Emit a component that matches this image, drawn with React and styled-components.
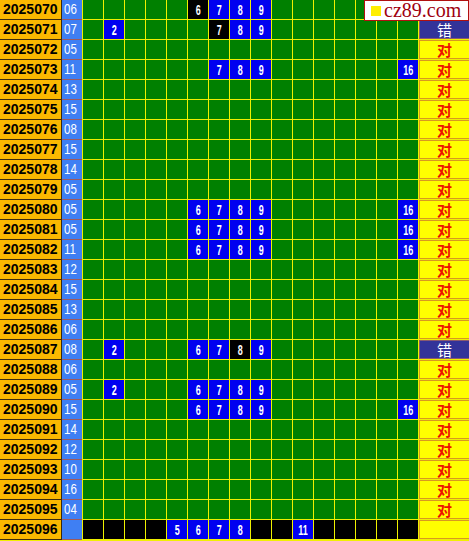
import React from "react";
import styled, { createGlobalStyle } from "styled-components";

const GlobalStyle = createGlobalStyle`
  html, body { margin: 0; padding: 0; background: #ffffff; }
  body { font-family: "Liberation Sans", Arial, sans-serif; }
`;

const rows = [
  { p: "2025070", n: "06", blue: [7, 8, 9], black: [6], s: "" },
  { p: "2025071", n: "07", blue: [2, 8, 9], black: [7], s: "err" },
  { p: "2025072", n: "05", blue: [], black: [], s: "ok" },
  { p: "2025073", n: "11", blue: [7, 8, 9, 16], black: [], s: "ok" },
  { p: "2025074", n: "13", blue: [], black: [], s: "ok" },
  { p: "2025075", n: "15", blue: [], black: [], s: "ok" },
  { p: "2025076", n: "08", blue: [], black: [], s: "ok" },
  { p: "2025077", n: "15", blue: [], black: [], s: "ok" },
  { p: "2025078", n: "14", blue: [], black: [], s: "ok" },
  { p: "2025079", n: "05", blue: [], black: [], s: "ok" },
  { p: "2025080", n: "05", blue: [6, 7, 8, 9, 16], black: [], s: "ok" },
  { p: "2025081", n: "05", blue: [6, 7, 8, 9, 16], black: [], s: "ok" },
  { p: "2025082", n: "11", blue: [6, 7, 8, 9, 16], black: [], s: "ok" },
  { p: "2025083", n: "12", blue: [], black: [], s: "ok" },
  { p: "2025084", n: "15", blue: [], black: [], s: "ok" },
  { p: "2025085", n: "13", blue: [], black: [], s: "ok" },
  { p: "2025086", n: "06", blue: [], black: [], s: "ok" },
  { p: "2025087", n: "08", blue: [2, 6, 7, 9], black: [8], s: "err" },
  { p: "2025088", n: "06", blue: [], black: [], s: "ok" },
  { p: "2025089", n: "05", blue: [2, 6, 7, 8, 9], black: [], s: "ok" },
  { p: "2025090", n: "15", blue: [6, 7, 8, 9, 16], black: [], s: "ok" },
  { p: "2025091", n: "14", blue: [], black: [], s: "ok" },
  { p: "2025092", n: "12", blue: [], black: [], s: "ok" },
  { p: "2025093", n: "10", blue: [], black: [], s: "ok" },
  { p: "2025094", n: "16", blue: [], black: [], s: "ok" },
  { p: "2025095", n: "04", blue: [], black: [], s: "ok" },
  { p: "2025096", n: "", blue: [5, 6, 7, 8, 11], black: [], s: "empty", dark: true },
];

const Board = styled.div`
  position: relative;
  width: 469px;
`;

const Grid = styled.div`
  display: grid;
  grid-template-columns: 61px 20px repeat(16, 20px) 50px;
  grid-auto-rows: 19px;
  gap: 1px;
  background: #f0f000;
  padding-bottom: 2px;
`;

const PeriodCell = styled.div`
  background: #fbb800;
  box-shadow: 0 1px 0 #3a2a10, 1px 0 0 #3a2a10, 1px 1px 0 #3a2a10;
  color: #000;
  font: bold 14px "Liberation Sans", Arial, sans-serif;
  line-height: 19px;
  padding-left: 3px;
  white-space: nowrap;
  overflow: hidden;
`;

const NumCell = styled.div`
  background: #3f7ff3;
  box-shadow: 0 1px 0 #a05a5a;
  color: #fff;
  font: 14px "Liberation Sans", Arial, sans-serif;
  line-height: 19px;
  padding-left: 2px;
  overflow: hidden;
  span {
    display: inline-block;
    transform: scaleX(0.82);
    transform-origin: left center;
  }
`;

const cellBg = { green: "#008000", blue: "#0000f0", black: "#000000" };

const Cell = styled.div`
  background: ${(p) => cellBg[p.$tone]};
  color: #fff;
  display: flex;
  align-items: center;
  justify-content: center;
  font: bold 15px "Liberation Sans", Arial, sans-serif;
  line-height: 19px;
  overflow: hidden;
  span {
    display: inline-block;
    transform: scaleX(0.6);
  }
`;

const Status = styled.div`
  background: ${(p) => (p.$kind === "err" ? "#333399" : "#ffff00")};
  color: ${(p) => (p.$kind === "err" ? "#ffffff" : "#ee1100")};
  box-shadow: inset 0 0 0 1px ${(p) => (p.$kind === "err" ? "#8a5a70" : "#d89a20")};
  margin-right: -1px;
  display: flex;
  align-items: center;
  justify-content: center;
  font: ${(p) => (p.$kind === "err" ? "normal" : "bold")} 15px "Noto Sans CJK SC", sans-serif;
  line-height: 17px;
  overflow: hidden;
`;

const Logo = styled.div`
  position: absolute;
  top: 0;
  right: 0;
  width: 105px;
  height: 21px;
  box-sizing: border-box;
  background: #ffffff;
  border: 1px solid #b01010;
  display: flex;
  align-items: center;
  gap: 3px;
  padding-left: 6px;
`;

const LogoMark = styled.div`
  width: 10px;
  height: 10px;
  background: #ffee00;
  flex: none;
`;

const LogoText = styled.span`
  font: 20px "Liberation Serif", "Times New Roman", serif;
  color: #a00010;
  line-height: 19px;
  white-space: nowrap;
`;

export default function App() {
  return (
    <>
      <GlobalStyle />
      <Board>
        <Grid>
          {rows.map((r) => (
            <React.Fragment key={r.p}>
              <PeriodCell>{r.p}</PeriodCell>
              <NumCell>
                <span>{r.n}</span>
              </NumCell>
              {Array.from({ length: 16 }, (_, i) => {
                const k = i + 1;
                const tone = r.blue.includes(k)
                  ? "blue"
                  : r.black.includes(k)
                  ? "black"
                  : r.dark
                  ? "black"
                  : "green";
                const show = r.blue.includes(k) || r.black.includes(k);
                return (
                  <Cell key={k} $tone={tone}>
                    {show && <span>{k}</span>}
                  </Cell>
                );
              })}
              <Status $kind={r.s}>
                {r.s === "ok" ? "对" : r.s === "err" ? "错" : ""}
              </Status>
            </React.Fragment>
          ))}
        </Grid>
        <Logo>
          <LogoMark />
          <LogoText>cz89.com</LogoText>
        </Logo>
      </Board>
    </>
  );
}
